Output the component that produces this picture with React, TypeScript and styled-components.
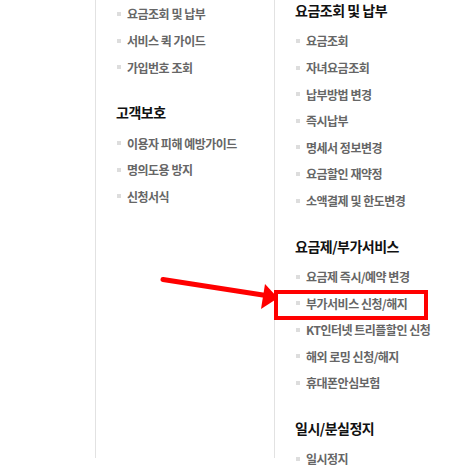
import React from "react";
import styled, { createGlobalStyle } from "styled-components";

const Global = createGlobalStyle`
  html, body { margin: 0; padding: 0; background: #fff; }
  body {
    font-family: "Noto Sans CJK KR", "Noto Sans", sans-serif;
    overflow: hidden;
  }
`;

type Section = { title?: string; items: string[]; mark?: string };

const leftCol: Section[] = [
  { items: ["요금조회 및 납부", "서비스 퀵 가이드", "가입번호 조회"] },
  { title: "고객보호", items: ["이용자 피해 예방가이드", "명의도용 방지", "신청서식"] },
];

const rightCol: Section[] = [
  {
    title: "요금조회 및 납부",
    items: ["요금조회", "자녀요금조회", "납부방법 변경", "즉시납부", "명세서 정보변경", "요금할인 재약정", "소액결제 및 한도변경"],
  },
  {
    title: "요금제/부가서비스",
    items: ["요금제 즉시/예약 변경", "부가서비스 신청/해지", "KT인터넷 트리플할인 신청", "해외 로밍 신청/해지", "휴대폰안심보험"],
    mark: "부가서비스 신청/해지",
  },
  { title: "일시/분실정지", items: ["일시정지"] },
];

const App = () => {
  return (
    <Page>
      <Global />
      <Menu>
        <Column pad="0.7px" w={179}>
          {leftCol.map((s, i) => (
            <Group key={i} first={i === 0}>
              {s.title && <Heading>{s.title}</Heading>}
              <List>
                {s.items.map((it) => (
                  <Item key={it}>{it}</Item>
                ))}
              </List>
            </Group>
          ))}
        </Column>
        <Column pad="0px" w={190}>
          {rightCol.map((s, i) => (
            <Group key={i} first={i === 0}>
              {s.title && <Heading>{s.title}</Heading>}
              <List>
                {s.items.map((it) => (
                  <Item key={it} marked={it === s.mark}>
                    {it}
                  </Item>
                ))}
              </List>
            </Group>
          ))}
        </Column>
      </Menu>
      <Arrow width="456" height="465" viewBox="0 0 456 465">
        <line x1="163" y1="279.5" x2="266" y2="295.5" stroke="#ff0000" strokeWidth="5" strokeLinecap="round" />
        <polygon points="265,284 278,298 261,309" fill="#ff0000" />
      </Arrow>
    </Page>
  );
};

export default App;

const Page = styled.div`
  position: relative;
  width: 456px;
  height: 465px;
  overflow: hidden;
`;

const Menu = styled.div`
  display: flex;
  margin-left: 95px;
  height: 458px;
`;

const Column = styled.div<{ pad: string; w: number }>`
  width: ${(p) => p.w}px;
  height: 458px;
  flex-shrink: 0;
  border-left: 1px solid #e2e2e2;
  padding: ${(p) => p.pad} 0 0 20px;
  box-sizing: border-box;
`;

const Group = styled.div<{ first?: boolean }>`
  margin-top: ${(p) => (p.first ? "0" : "21.7px")};
`;

const Heading = styled.h3`
  margin: 0 0 7.7px;
  height: 20px;
  line-height: 20px;
  font-size: 14px;
  font-weight: 700;
  letter-spacing: -0.5px;
  color: #111;
  white-space: nowrap;
`;

const List = styled.ul`
  list-style: none;
  margin: 0;
  padding: 0;
`;

const Item = styled.li<{ marked?: boolean }>`
  position: relative;
  display: flex;
  align-items: center;
  gap: 6px;
  height: 26.6px;
  font-size: 12px;
  font-weight: 700;
  letter-spacing: -0.5px;
  color: #666;
  white-space: nowrap;
  &::before {
    content: "";
    width: 4px;
    height: 4px;
    margin-left: 1px;
    background: #ddd;
    flex-shrink: 0;
  }
  ${(p) =>
    p.marked &&
    `
    &::after {
      content: "";
      position: absolute;
      left: -21px;
      top: 0;
      width: 154px;
      height: 30px;
      border: 4px solid #ff0000;
      box-sizing: border-box;
    }
  `}
`;

const Arrow = styled.svg`
  position: absolute;
  left: 0;
  top: 0;
  pointer-events: none;
`;
